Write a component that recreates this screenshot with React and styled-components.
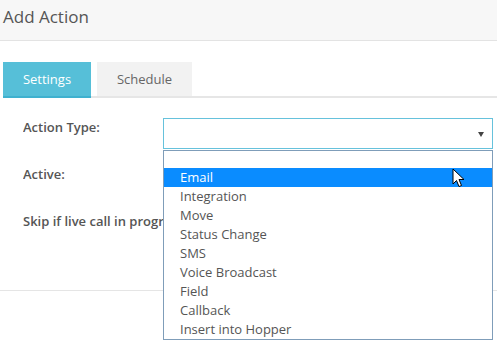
import styled, { createGlobalStyle } from 'styled-components';

const options = [
  'Email',
  'Integration',
  'Move',
  'Status Change',
  'SMS',
  'Voice Broadcast',
  'Field',
  'Callback',
  'Insert into Hopper',
];

export default function App() {
  return (
    <>
      <Global />
      <Modal>
        <Header>
          <Title>Add Action</Title>
        </Header>
        <TabBar>
          <Tab active>Settings</Tab>
          <Tab>Schedule</Tab>
        </TabBar>
        <Body>
          <Row>
            <Label>Action Type:</Label>
            <SelectWrap>
              <SelectBox>
                <Caret />
              </SelectBox>
              <DropList>
                <EmptyOption />
                {options.map((opt, i) => (
                  <Option key={opt} selected={i === 0}>
                    {opt}
                    {i === 0 && <Pointer />}
                  </Option>
                ))}
              </DropList>
            </SelectWrap>
          </Row>
          <Row>
            <Label>Active:</Label>
          </Row>
          <Row>
            <Label>Skip if live call in progress:</Label>
          </Row>
        </Body>
        <Footer />
      </Modal>
    </>
  );
}

function Pointer() {
  return (
    <Cursor width="13" height="20" viewBox="0 0 13 20">
      <path
        d="M1 1 L1 16 L4.5 12.5 L7 18.5 L9.5 17.5 L7 11.5 L12 11.5 Z"
        fill="#fff"
        stroke="#000"
        strokeWidth="1"
        strokeLinejoin="miter"
      />
    </Cursor>
  );
}

const Global = createGlobalStyle`
  body {
    margin: 0;
    background: #fff;
    font-family: "Open Sans", "Liberation Sans", sans-serif;
    color: #555;
    overflow: hidden;
  }
`;

const Modal = styled.div`
  width: 497px;
  height: 343px;
  display: flex;
  flex-direction: column;
  overflow: hidden;
`;

const Header = styled.div`
  height: 41px;
  box-sizing: border-box;
  padding: 4px 0 0 3px;
  background: #f7f7f7;
  border-bottom: 1px solid #e3e3e3;
`;

const Title = styled.div`
  font-size: 17px;
  line-height: 26px;
  color: #555;
`;

const TabBar = styled.div`
  display: flex;
  gap: 6px;
  margin: 21px 0 0 3px;
  border-bottom: 2px solid #e6e6e6;
`;

const Tab = styled.div`
  width: ${p => (p.active ? '88px' : '95px')};
  height: 34px;
  margin-bottom: -2px;
  display: flex;
  align-items: center;
  justify-content: center;
  font-size: 13px;
  color: ${p => (p.active ? '#fff' : '#666')};
  background: ${p => (p.active ? '#56bfd8' : '#f2f2f2')};
  border-bottom: 2px solid ${p => (p.active ? '#3fb1cf' : '#e6e6e6')};
`;

const Body = styled.div`
  display: flex;
  flex-direction: column;
  gap: 16px;
  padding: 20px 0 0 23px;
  height: 192px;
  box-sizing: border-box;
`;

const Row = styled.div`
  display: flex;
  align-items: flex-start;
  height: 31px;
  flex-shrink: 0;
`;

const Label = styled.div`
  width: 140px;
  flex-shrink: 0;
  font-size: 13px;
  line-height: 18px;
  font-weight: 600;
  color: #555;
  white-space: nowrap;
  overflow: hidden;
`;

const SelectWrap = styled.div`
  position: relative;
  width: 330px;
  height: 31px;
  z-index: 2;
`;

const SelectBox = styled.div`
  height: 31px;
  box-sizing: border-box;
  border: 1px solid #66c2dc;
  background: #fff;
  display: flex;
  align-items: center;
  justify-content: flex-end;
  padding-right: 8px;
`;

const Caret = styled.div`
  width: 0;
  height: 0;
  border-left: 3.5px solid transparent;
  border-right: 3.5px solid transparent;
  border-top: 5px solid #444;
  margin-top: 1px;
`;

const DropList = styled.div`
  position: absolute;
  top: calc(100% + 1px);
  left: 0;
  width: 330px;
  box-sizing: border-box;
  border: 1px solid #7f9db9;
  background: #fff;
`;

const EmptyOption = styled.div`
  height: 17px;
`;

const Option = styled.div`
  position: relative;
  height: 19px;
  line-height: 19px;
  padding-left: 16px;
  font-size: 13px;
  color: ${p => (p.selected ? '#fff' : '#555')};
  background: ${p => (p.selected ? '#0a8cff' : 'transparent')};
`;

const Cursor = styled.svg`
  position: absolute;
  left: 288px;
  top: 0px;
`;

const Footer = styled.div`
  border-top: 1px solid #e5e5e5;
`;
